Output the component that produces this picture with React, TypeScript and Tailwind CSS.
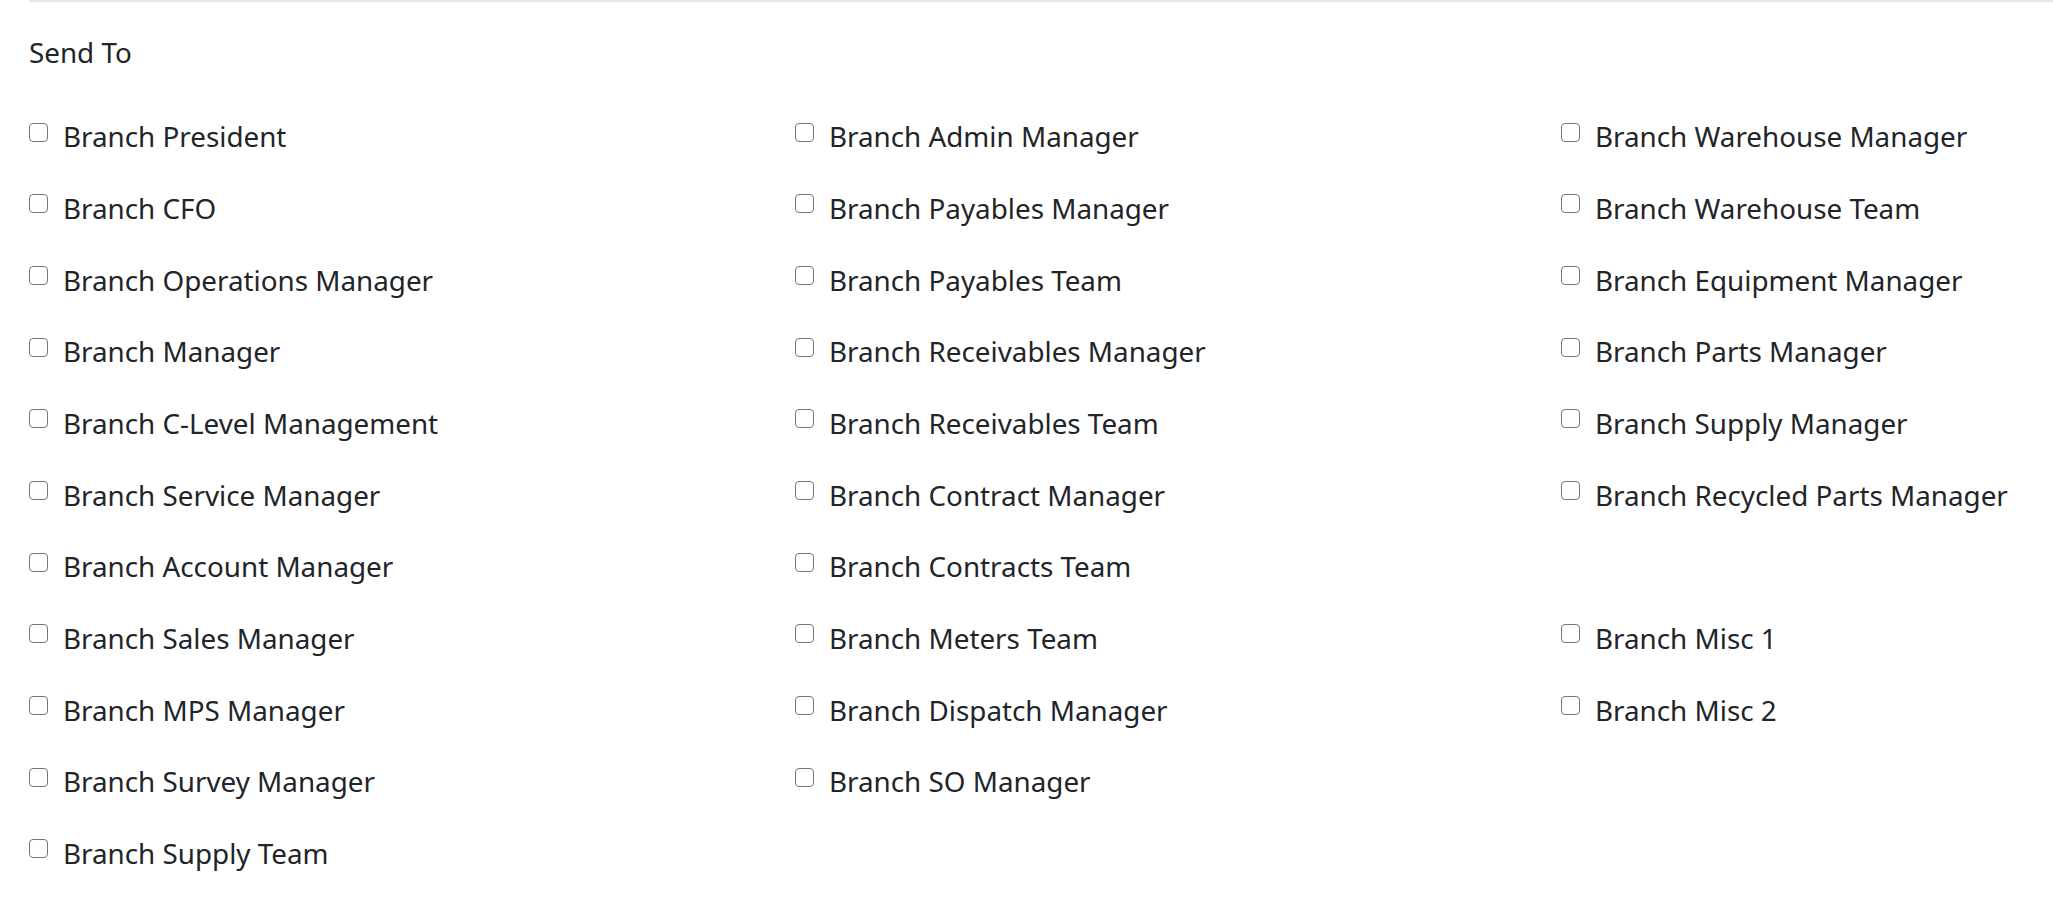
import React from "react";

const columns: (string | null)[][] = [
  [
    "Branch President",
    "Branch CFO",
    "Branch Operations Manager",
    "Branch Manager",
    "Branch C-Level Management",
    "Branch Service Manager",
    "Branch Account Manager",
    "Branch Sales Manager",
    "Branch MPS Manager",
    "Branch Survey Manager",
    "Branch Supply Team",
  ],
  [
    "Branch Admin Manager",
    "Branch Payables Manager",
    "Branch Payables Team",
    "Branch Receivables Manager",
    "Branch Receivables Team",
    "Branch Contract Manager",
    "Branch Contracts Team",
    "Branch Meters Team",
    "Branch Dispatch Manager",
    "Branch SO Manager",
  ],
  [
    "Branch Warehouse Manager",
    "Branch Warehouse Team",
    "Branch Equipment Manager",
    "Branch Parts Manager",
    "Branch Supply Manager",
    "Branch Recycled Parts Manager",
    null,
    "Branch Misc 1",
    "Branch Misc 2",
  ],
];

const CheckRow = ({ label }: { label: string }) => (
  <label className="flex items-start h-[71.7px] cursor-pointer">
    <span className="mt-[6.3px] w-[19px] h-[19px] shrink-0 rounded-[4px] border-[1.5px] border-[#767676] bg-white" />
    <span className="ml-[15px] -mt-[1px] leading-[42px]">{label}</span>
  </label>
);

export default function App() {
  return (
    <div
      className="w-[2053px] h-[911px] bg-white pl-[29px] text-[#212529] text-[27.8px] overflow-hidden"
      style={{ fontFamily: '"Noto Sans", sans-serif' }}
    >
      <div className="border-t-2 border-[#e6e6e6]">
        <div className="mt-[29px] leading-[42px]">Send To</div>
        <div className="mt-[43.3px] grid grid-cols-[766px_766px_1fr]">
          {columns.map((col, i) => (
            <div key={i} className="flex flex-col">
              {col.map((label, j) =>
                label ? (
                  <CheckRow key={j} label={label} />
                ) : (
                  <div key={j} className="h-[71.7px]" />
                )
              )}
            </div>
          ))}
        </div>
      </div>
    </div>
  );
}
